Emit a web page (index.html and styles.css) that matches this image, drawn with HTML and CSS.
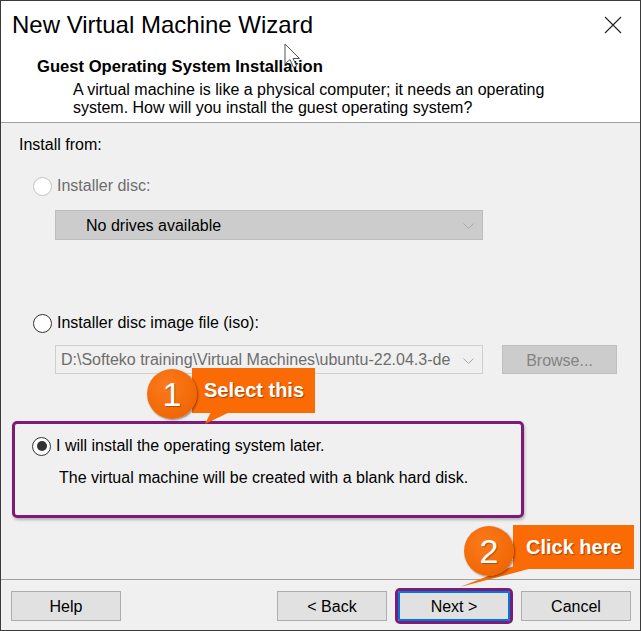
FILE: index.html
```html
<!DOCTYPE html>
<html>
<head>
<meta name="viewport" content="width=device-width, initial-scale=1">
<link rel="stylesheet" href="styles.css">
</head>
<body>

<div class="window">
  <div class="head">
    <div class="titlebar">
      <span class="title">New Virtual Machine Wizard</span>
      <svg class="close" width="18" height="18" viewBox="0 0 18 18">
        <path d="M1 1 L17 17 M17 1 L1 17" stroke="#222" stroke-width="1.1" fill="none"/>
      </svg>
    </div>
    <div class="intro">
      <div class="intro-title">Guest Operating System Installation</div>
      <div class="intro-text">A virtual machine is like a physical computer; it needs an operating<br>system. How will you install the guest operating system?</div>
    </div>
  </div>

  <div class="content">
    <div class="label">Install from:</div>

    <div class="option disabled"><span class="radio"></span>Installer disc:</div>
    <div class="select drives">
      <span>No drives available</span>
      <svg class="chevron" width="11" height="6" viewBox="0 0 11 6"><path d="M0.5 0.5 L5.5 5.5 L10.5 0.5" stroke="#a8a8a8" fill="none"/></svg>
    </div>

    <div class="option iso-option"><span class="radio"></span>Installer disc image file (iso):</div>
    <div class="file-row">
      <div class="select iso">
        <span class="path">D:\Softeko training\Virtual Machines\ubuntu-22.04.3-de</span>
        <svg class="chevron" width="11" height="6" viewBox="0 0 11 6"><path d="M0.5 0.5 L5.5 5.5 L10.5 0.5" stroke="#a8a8a8" fill="none"/></svg>
      </div>
      <div class="btn browse">Browse...</div>
    </div>

    <div class="later">
      <div class="option"><span class="radio checked"></span>I will install the operating system later.</div>
      <div class="hint">The virtual machine will be created with a blank hard disk.</div>
    </div>
  </div>

  <div class="footer">
    <div class="btn">Help</div>
    <div class="spacer"></div>
    <div class="btn">&lt; Back</div>
    <div class="btn next">Next &gt;</div>
    <div class="btn">Cancel</div>
  </div>

  <!-- callouts over the dialog -->
  <svg class="tails" width="641" height="631" viewBox="0 0 641 631">
    <path d="M212 410 L234 410 L205 424 Z" fill="#fa6a05"/>
    <path d="M514 566 L540 566 L460 587 Z" fill="#fa6a05"/>
  </svg>
  <div class="callout one">
    <div class="tag">Select this</div>
    <div class="num">1</div>
  </div>
  <div class="callout two">
    <div class="tag">Click here</div>
    <div class="num">2</div>
  </div>

  <svg class="cursor" width="18" height="27" viewBox="0 0 18 27">
    <path d="M1 1 L1 21 L6 16.5 L9.5 24.5 L12.5 23 L9 15.5 L15.5 15.5 Z" fill="#fff" stroke="#555" stroke-width="1"/>
  </svg>
</div>

</body>
</html>
```

FILE: styles.css
```css
* {
  box-sizing: border-box;
}

body {
  margin: 0;
  font-family: "Liberation Sans", Arial, sans-serif;
  font-size: 16px;
  color: #000;
}

.window {
  position: relative;
  width: 641px;
  height: 631px;
  border: 1px solid #3a3a3a;
  background: #f0f0f0;
  display: flex;
  flex-direction: column;
  overflow: hidden;
}

/* header */
.head {
  height: 122px;
  background: #fff;
  border-bottom: 1px solid #a0a0a0;
}

.titlebar {
  height: 47px;
  display: flex;
  align-items: center;
  padding-left: 11px;
  padding-right: 18px;
}

.title {
  font-size: 24px;
  flex: 1;
}

.intro {
  padding-left: 36px;
  padding-top: 9px;
}

.intro-title {
  font-weight: bold;
  font-size: 16.6px;
  line-height: 20px;
}

.intro-text {
  margin-top: 4px;
  padding-left: 36px;
  line-height: 18px;
}

/* body */
.content {
  height: 456px;
  padding-top: 12px;
}

.label {
  line-height: 20px;
  margin-left: 18px;
}

.option {
  display: flex;
  align-items: center;
  height: 22px;
  margin-left: 32px;
}

.option.disabled {
  margin-top: 20px;
  color: #6d6d6d;
}

.radio {
  width: 19px;
  height: 19px;
  border: 1px solid #333;
  border-radius: 50%;
  background: #fff;
  margin-right: 5px;
  display: flex;
  align-items: center;
  justify-content: center;
}

.disabled .radio {
  border-color: #c4c4c4;
}

.radio.checked::after {
  content: "";
  width: 10px;
  height: 10px;
  border-radius: 50%;
  background: #333;
}

.select {
  display: flex;
  align-items: center;
  width: 428px;
  margin-left: 54px;
  position: relative;
}

.select .chevron {
  position: absolute;
  right: 8px;
  top: 12px;
}

.drives {
  margin-top: 13px;
  height: 30px;
  background: #cccccc;
  border: 1px solid #bdbdbd;
  padding-left: 30px;
  padding-top: 2px;
}

.iso-option {
  margin-top: 72px;
}

.file-row {
  display: flex;
  margin-top: 11px;
  gap: 19px;
}

.iso {
  margin-left: 54px;
  height: 29px;
  background: #f0f0f0;
  border: 1px solid #cfcfcf;
  padding-left: 5px;
  padding-top: 1px;
  color: #6d6d6d;
}

.path {
  white-space: nowrap;
}

.btn {
  width: 110px;
  height: 30px;
  background: #e1e1e1;
  border: 1px solid #adadad;
  display: flex;
  align-items: center;
  justify-content: center;
  padding-top: 2px;
}

.browse {
  width: 115px;
  height: 29px;
  background: #cccccc;
  border-color: #bfbfbf;
  color: #838383;
}

.later {
  margin-top: 47px;
  margin-left: 11px;
  width: 512px;
  height: 97px;
  border: 3px solid #7e1a78;
  border-radius: 5px;
  box-shadow: 1px 2px 3px rgba(0, 0, 0, 0.25);
  padding-top: 11px;
}

.later .option {
  margin-left: 17px;
}

.hint {
  margin-top: 11px;
  margin-left: 44px;
  line-height: 20px;
}

/* footer */
.footer {
  flex: 1;
  border-top: 1px solid #a0a0a0;
  display: flex;
  align-items: flex-start;
  padding: 11px 9px 0 10px;
  gap: 11px;
}

.spacer {
  flex: 1;
}

.next {
  width: 112px;
  border: 2px solid #0078d7;
  outline: 3px solid #7e1a78;
  outline-offset: 0px;
  border-radius: 2px;
}

/* callouts */
.tails {
  position: absolute;
  left: -1px;
  top: -1px;
}

.callout {
  position: absolute;
}

.callout.one {
  left: 146px;
  top: 366px;
}

.callout.two {
  left: 463px;
  top: 523px;
}

.tag {
  position: absolute;
  background: #fa6a05;
  color: #fff;
  font-weight: bold;
  font-size: 20px;
  text-shadow: 1px 1px 1px rgba(0, 0, 0, 0.35);
  display: flex;
  align-items: center;
}

.one .tag {
  left: 45px;
  top: 1px;
  width: 123px;
  height: 45px;
  padding-left: 12px;
}

.two .tag {
  left: 49px;
  top: 1px;
  width: 121px;
  height: 44px;
  padding-left: 13px;
}

.num {
  position: absolute;
  left: 0;
  top: 2px;
  width: 50px;
  height: 50px;
  border-radius: 50%;
  background: radial-gradient(circle at 40% 35%, #fb7a1c 0%, #f36a08 60%, #e55f02 100%);
  box-shadow: 1px 1px 2px rgba(0, 0, 0, 0.45);
  color: #fff;
  font-size: 34px;
  display: flex;
  align-items: center;
  justify-content: center;
  text-shadow: 1px 1px 1px rgba(0, 0, 0, 0.3);
}

.cursor {
  position: absolute;
  left: 283px;
  top: 42px;
}
```
